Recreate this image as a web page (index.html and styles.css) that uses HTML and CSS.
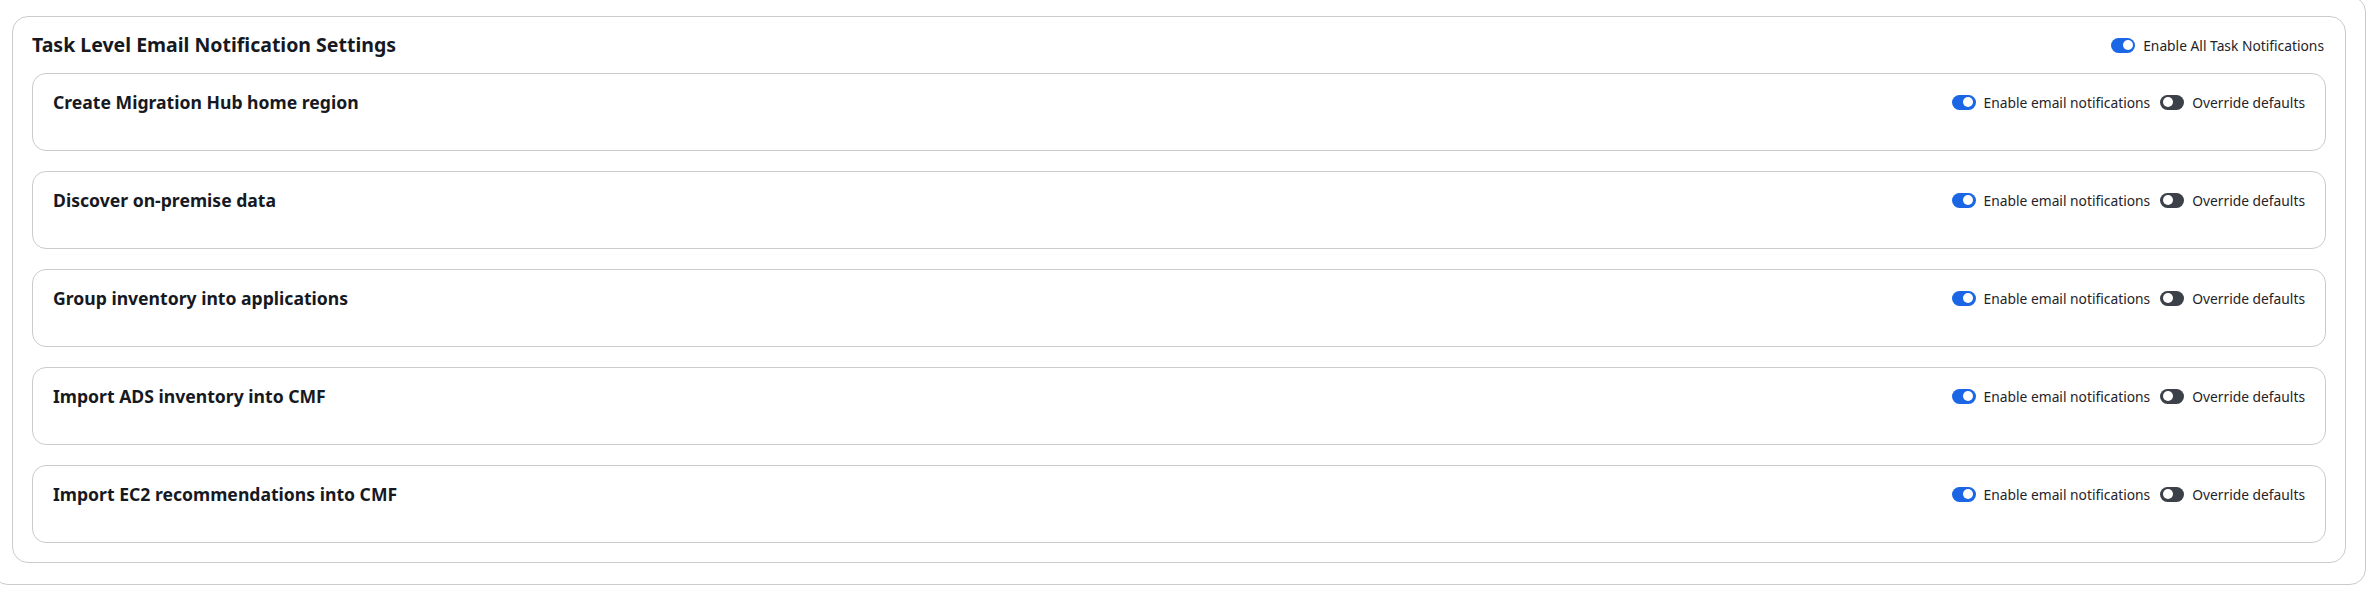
FILE: index.html
```html
<!DOCTYPE html>
<html lang="en">
<head>
  <meta charset="UTF-8">
  <title>Task Level Email Notification Settings</title>
  <link rel="stylesheet" href="styles.css">
</head>
<body>

  <div class="pagina">
    <section class="painel">
      <div class="painel-topo">
        <h2>Task Level Email Notification Settings</h2>
        <label class="chave">
          <span class="toggle ligado"></span>
          <span>Enable All Task Notifications</span>
        </label>
      </div>
      <div id="listaTarefas"></div>
    </section>
  </div>

  <script>
    function renderizarTarefas(tarefas) {
      const htmlBuilder = [];

      tarefas.forEach(t => {
        htmlBuilder.push(`
          <div class="tarefa">
            <h3>${t.nome}</h3>
            <div class="controles">
              <label class="chave">
                <span class="toggle ${t.email ? "ligado" : ""}"></span>
                <span>Enable email notifications</span>
              </label>
              <label class="chave">
                <span class="toggle ${t.override ? "ligado" : ""}"></span>
                <span>Override defaults</span>
              </label>
            </div>
          </div>
        `);
      });

      document.querySelector("#listaTarefas").innerHTML = htmlBuilder.join("");
    }

    // Tarefas da migração
    const dadosTarefas = [
      { nome: "Create Migration Hub home region", email: true, override: false },
      { nome: "Discover on-premise data", email: true, override: false },
      { nome: "Group inventory into applications", email: true, override: false },
      { nome: "Import ADS inventory into CMF", email: true, override: false },
      { nome: "Import EC2 recommendations into CMF", email: true, override: false },
    ];

    renderizarTarefas(dadosTarefas);
  </script>

</body>
</html>
```

FILE: styles.css
```css
body {
  margin: 0;
  font-family: "Noto Sans", Arial, sans-serif;
  color: #16191f;
  background: #fff;
}
.pagina {
  margin: -4px 7px 13px -8px;
  padding: 19px 19px 21px;
  border: 1px solid #c9cbcf;
  border-radius: 16px;
}
.painel {
  border: 1px solid #c9cbcf;
  border-radius: 16px;
  padding: 14px 19px 19px;
}
.painel-topo {
  display: flex;
  align-items: center;
  justify-content: space-between;
  margin-bottom: 14px;
}
.painel-topo h2 {
  margin: 0;
  font-size: 19.5px;
  line-height: 28px;
  font-weight: 700;
}
.painel-topo .chave {
  margin-right: 2px;
}
#listaTarefas {
  display: flex;
  flex-direction: column;
  gap: 20px;
}
.tarefa {
  display: flex;
  align-items: flex-start;
  justify-content: space-between;
  height: 78px;
  box-sizing: border-box;
  padding: 16px 20px 0;
  border: 1px solid #c9cbcf;
  border-radius: 14px;
}
.tarefa h3 {
  margin: 0;
  font-size: 17.6px;
  line-height: 24px;
  font-weight: 700;
}
.controles {
  display: flex;
  align-items: center;
  gap: 10px;
  height: 24px;
}
.chave {
  display: flex;
  align-items: center;
  gap: 8px;
  font-size: 13.8px;
  color: #1f2329;
}
.toggle {
  position: relative;
  width: 24px;
  height: 15px;
  border-radius: 8px;
  background: #3c4049;
}
.toggle::after {
  content: "";
  position: absolute;
  top: 2.5px;
  left: 2.5px;
  width: 10px;
  height: 10px;
  border-radius: 50%;
  background: #fff;
}
.toggle.ligado {
  background: #1b66e4;
}
.toggle.ligado::after {
  left: 11.5px;
}
```
